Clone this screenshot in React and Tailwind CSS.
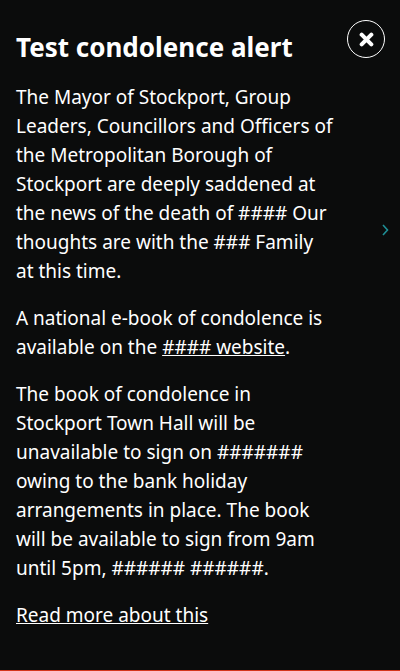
export default function App() {
  return (
    <div className="relative h-[671px] w-[400px] overflow-hidden bg-[#0b0c0c] text-white border-b border-[#d4351c]" style={{ fontFamily: '"Noto Sans", sans-serif' }}>
      <button className="absolute right-[15px] top-[20px] flex h-[38px] w-[38px] items-center justify-center rounded-full border border-white">
        <svg width="15" height="15" viewBox="0 0 14 14">
          <path d="M2.5 2.5 L11.5 11.5 M11.5 2.5 L2.5 11.5" stroke="white" strokeWidth="3.8" strokeLinecap="round" />
        </svg>
      </button>
      <div className="absolute right-[11px] top-[224px]">
        <svg width="7" height="12" viewBox="0 0 7 12">
          <path d="M1 1 L5.5 6 L1 11" stroke="#1f8f96" strokeWidth="1.6" fill="none" />
        </svg>
      </div>
      <div className="px-4 pt-[29px]">
        <h2 className="text-[26px] font-bold leading-[36px] mb-[18px]">Test condolence alert</h2>
        <div className="w-[318px] text-[19px] leading-[29px] space-y-[18px]">
          <p>The Mayor of Stockport, Group Leaders, Councillors and Officers of the Metropolitan Borough of Stockport are deeply saddened at the news of the death of #### Our thoughts are with the ### Family at this time.</p>
          <p>A national e-book of condolence is available on the <a href="#" className="underline">#### website</a>.</p>
          <p>The book of condolence in Stockport Town Hall will be unavailable to sign on ####### owing to the bank holiday arrangements in place. The book will be available to sign from 9am until 5pm, ###### ######.</p>
          <p><a href="#" className="underline">Read more about this</a></p>
        </div>
      </div>
    </div>
  );
}
